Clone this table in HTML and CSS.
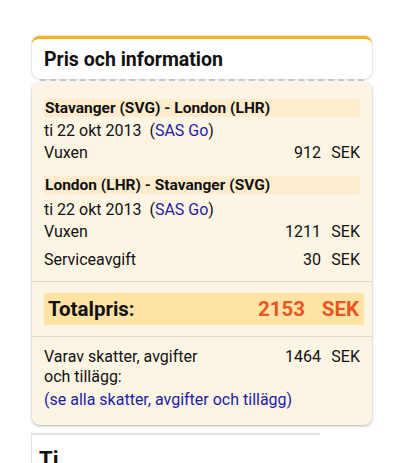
FILE: index.html
```html
<!DOCTYPE html>
<html lang="sv">
<head>
<meta charset="utf-8">
<link rel="stylesheet" href="styles.css">
</head>
<body>
<div class="wrap">
  <div class="header"><h2>Pris och information</h2></div>
  <div class="content">
    <div class="sect">
      <div class="route">Stavanger (SVG) - London (LHR)</div>
      <div class="line">ti 22 okt 2013 &nbsp;(<a>SAS Go</a>)</div>
      <div class="row"><span>Vuxen</span><span class="amt">912</span><span class="cur">SEK</span></div>
    </div>
    <div class="sect second">
      <div class="route">London (LHR) - Stavanger (SVG)</div>
      <div class="line">ti 22 okt 2013 &nbsp;(<a>SAS Go</a>)</div>
      <div class="row"><span>Vuxen</span><span class="amt">1211</span><span class="cur">SEK</span></div>
      <div class="row gap"><span>Serviceavgift</span><span class="amt">30</span><span class="cur">SEK</span></div>
    </div>
    <div class="total-wrap">
      <div class="total"><span>Totalpris:</span><span class="amt">2153</span><span class="cur">SEK</span></div>
    </div>
    <div class="taxes">
      <div class="row"><span class="lbl">Varav skatter, avgifter och tillägg:</span><span class="amt">1464</span><span class="cur">SEK</span></div>
      <a class="link">(se alla skatter, avgifter och tillägg)</a>
    </div>
  </div>
  <div class="next"><h3>Ti</h3></div>
</div>
</body>
</html>
```
FILE: styles.css
```css
* { box-sizing: border-box; }
html, body { margin: 0; padding: 0; background: #fff; }
body {
  font-family: Roboto, "Liberation Sans", sans-serif;
  color: #111;
  font-size: 16px;
  overflow: hidden;
  height: 463px;
}
.wrap {
  width: 340px;
  margin-left: 32px;
  padding-top: 36px;
}
.header {
  height: 43px;
  background: #fff;
  border-top: 3px solid #f7b31c;
  border-radius: 8px;
  box-shadow: 0 0 2px rgba(0,0,0,0.35);
  display: flex;
  align-items: center;
  padding-left: 12px;
  position: relative;
}
.header::after {
  content: "";
  position: absolute;
  left: 8px;
  right: 8px;
  bottom: -2px;
  border-bottom: 2px dashed #c9c7c2;
}
.header h2 {
  margin: 0;
  font-size: 19.5px;
  font-weight: 700;
  color: #111;
}
.content {
  margin-top: 3px;
  background: #fdf5e4;
  border-radius: 8px;
  box-shadow: 0 1px 3px rgba(0,0,0,0.3);
  padding: 17px 12px 15px 12px;
}
.sect { margin-bottom: 12px; }
.sect.second { margin-bottom: 0; padding-bottom: 10px; }
.route {
  background: #feeccd;
  font-weight: 700;
  font-size: 15.5px;
  height: 18px;
  line-height: 19px;
  padding-left: 1px;
}
.line {
  line-height: 22px;
  margin-top: 3px;
}
.second .line { margin-top: 5px; }
.line a, .link { color: #1c1ca6; text-decoration: none; }
.row {
  display: flex;
  line-height: 22px;
}
.row .amt { margin-left: auto; }
.row .cur { width: 39px; text-align: right; }
.row.gap { margin-top: 6px; }
.total-wrap {
  border-top: 1px solid #e1dacb;
  border-bottom: 1px solid #e1dacb;
  margin: 0 -12px;
  padding: 11px 8px 11px 12px;
}
.total {
  display: flex;
  align-items: center;
  background: #fee3a5;
  height: 32px;
  padding: 0 5px 0 4px;
  font-weight: 700;
  font-size: 20.5px;
}
.total .amt { margin-left: auto; color: #ea5521; font-weight: 700; }
.total .cur { width: 54px; text-align: right; color: #ea5521; }
.taxes { padding-top: 10px; }
.taxes .lbl { width: 175px; line-height: 20px; }
.taxes .row { line-height: 20px; }
.link { display: block; margin-top: 3px; line-height: 20px; }
.next {
  margin-top: 8px;
  margin-left: -1px;
  border-top: 2px solid #e3e1dc;
  border-left: 1px solid #e3e1dc;
  width: 289px;
  height: 40px;
  padding-left: 7px;
}
.next h3 { margin: 0; font-size: 22px; line-height: 50px; }
```
